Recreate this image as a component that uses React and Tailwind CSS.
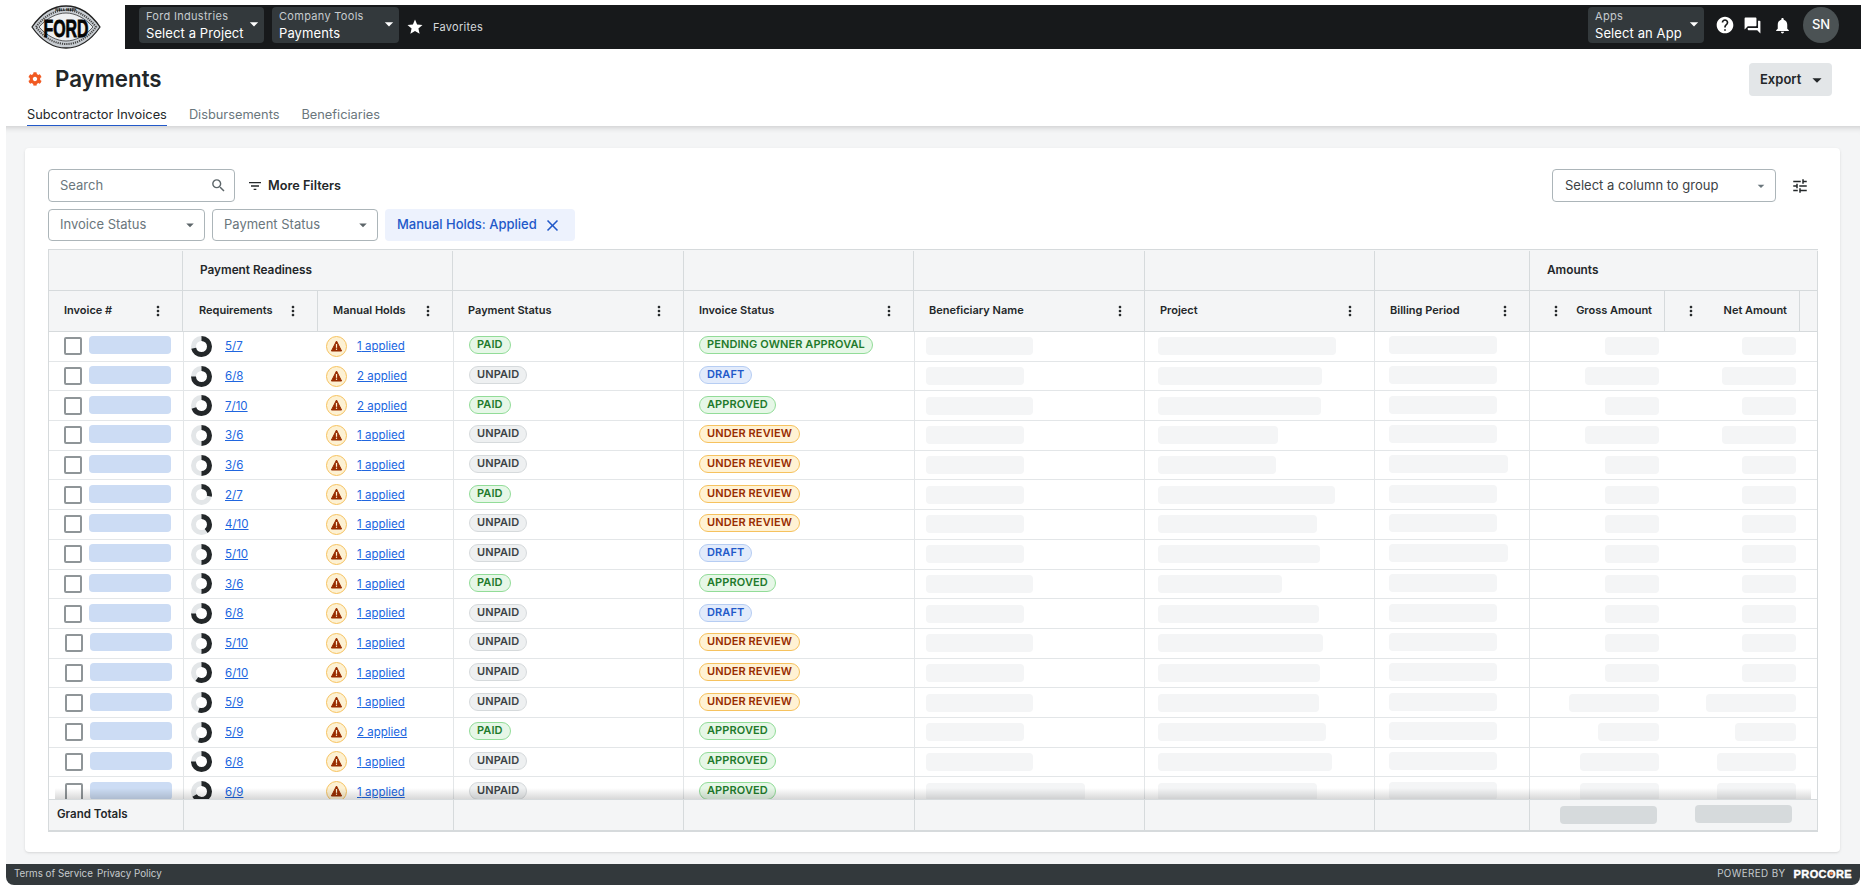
import { MdStar, MdHelp, MdForum, MdNotifications, MdSearch, MdFilterList, MdTune, MdClose, MdMoreVert, MdArrowDropDown } from 'react-icons/md'
import { FaCog } from 'react-icons/fa'

const HEAD_COLS = 'grid-cols-[134px_135px_135px_231px_230px_231px_230px_155px_135px_135px_18px]'
const BODY_COLS = 'grid-cols-[135px_135px_135px_230px_231px_230px_230px_155px_135px_153px]'
const TOTAL_COLS = 'grid-cols-[135px_270px_230px_231px_230px_230px_155px_135px_153px]'

const rows = [
  { req: '5/7', holds: 1, pay: 'PAID', inv: 'PENDING OWNER APPROVAL', ben: 107, proj: 178, bill: 108, amt: 54 },
  { req: '6/8', holds: 2, pay: 'UNPAID', inv: 'DRAFT', ben: 98, proj: 164, bill: 108, amt: 74 },
  { req: '7/10', holds: 2, pay: 'PAID', inv: 'APPROVED', ben: 107, proj: 163, bill: 108, amt: 54 },
  { req: '3/6', holds: 1, pay: 'UNPAID', inv: 'UNDER REVIEW', ben: 98, proj: 120, bill: 108, amt: 74 },
  { req: '3/6', holds: 1, pay: 'UNPAID', inv: 'UNDER REVIEW', ben: 98, proj: 118, bill: 119, amt: 54 },
  { req: '2/7', holds: 1, pay: 'PAID', inv: 'UNDER REVIEW', ben: 98, proj: 177, bill: 108, amt: 54 },
  { req: '4/10', holds: 1, pay: 'UNPAID', inv: 'UNDER REVIEW', ben: 98, proj: 159, bill: 108, amt: 54 },
  { req: '5/10', holds: 1, pay: 'UNPAID', inv: 'DRAFT', ben: 98, proj: 162, bill: 119, amt: 54 },
  { req: '3/6', holds: 1, pay: 'PAID', inv: 'APPROVED', ben: 107, proj: 124, bill: 108, amt: 54 },
  { req: '6/8', holds: 1, pay: 'UNPAID', inv: 'DRAFT', ben: 98, proj: 161, bill: 108, amt: 54 },
  { req: '5/10', holds: 1, pay: 'UNPAID', inv: 'UNDER REVIEW', ben: 107, proj: 165, bill: 108, amt: 54 },
  { req: '6/10', holds: 1, pay: 'UNPAID', inv: 'UNDER REVIEW', ben: 98, proj: 162, bill: 108, amt: 54 },
  { req: '5/9', holds: 1, pay: 'UNPAID', inv: 'UNDER REVIEW', ben: 107, proj: 161, bill: 108, amt: 90 },
  { req: '5/9', holds: 2, pay: 'PAID', inv: 'APPROVED', ben: 98, proj: 168, bill: 108, amt: 61 },
  { req: '6/8', holds: 1, pay: 'UNPAID', inv: 'APPROVED', ben: 107, proj: 174, bill: 108, amt: 79 },
  { req: '6/9', holds: 1, pay: 'UNPAID', inv: 'APPROVED', ben: 159, proj: 159, bill: 108, amt: 79 },
]

const badgeTone = {
  PAID: 'bg-[#e6f7e7] border-[#92dc98] text-[#1f7a2c]',
  APPROVED: 'bg-[#e6f7e7] border-[#92dc98] text-[#1f7a2c]',
  'PENDING OWNER APPROVAL': 'bg-[#e6f7e7] border-[#92dc98] text-[#1f7a2c]',
  UNPAID: 'bg-[#eef0f1] border-[#d6dadc] text-[#3c4245]',
  DRAFT: 'bg-[#e2ebfb] border-[#b6cdf3] text-[#2259c9]',
  'UNDER REVIEW': 'bg-[#fff2d4] border-[#f6c25e] text-[#982c00]',
}

function Logo() {
  return (
    <svg width="70" height="44" viewBox="0 0 70 44" className="ml-[31px] shrink-0 overflow-visible">
      <path d="M1 22 C12 6 24 1 35 1 C46 1 58 6 69 22 C58 38 46 43 35 43 C24 43 12 38 1 22Z" fill="#c9ced3" stroke="#222" strokeWidth="1.3" />
      <path d="M5 22 C14 10 25 5 35 5 C45 5 56 10 65 22 C56 34 45 39 35 39 C25 39 14 34 5 22Z" fill="none" stroke="#444" strokeWidth="2" strokeDasharray="1.2 1" />
      <path d="M8 22 C16 13 26 8 35 8 C44 8 54 13 62 22 C54 31 44 36 35 36 C26 36 16 31 8 22Z" fill="#eef0f2" stroke="#333" strokeWidth="0.8" />
      <text x="35" y="5.5" textAnchor="middle" fontSize="3.6" fontWeight="700" fontFamily="Liberation Sans, sans-serif" fill="#111">WALL MARK</text>
      <text x="35" y="32" textAnchor="middle" fontSize="24" fontWeight="700" textLength="45" lengthAdjust="spacingAndGlyphs" fontFamily="Liberation Sans, sans-serif" fill="#050505" stroke="#050505" strokeWidth="0.8">FORD</text>
    </svg>
  )
}

function NavSelect({ label, value, width }) {
  return (
    <div className={`relative h-9 rounded bg-[#33393c] pl-[7px] pt-[3px] ${width}`}>
      <div className="text-[11px] leading-[13px] tracking-[0.3px] text-[#c6cbce]">{label}</div>
      <div className="mt-[2px] text-[13px] leading-[16px] tracking-[0.1px] text-white">{value}</div>
      <MdArrowDropDown size={20} className="absolute right-0 top-[7px] text-white" />
    </div>
  )
}

function Donut({ value }) {
  const [a, b] = value.split('/').map(Number)
  return (
    <svg width="21" height="21" viewBox="0 0 21 21" className="shrink-0 -rotate-90">
      <circle cx="10.5" cy="10.5" r="8" fill="none" stroke="#e3e6e8" strokeWidth="5" />
      <circle cx="10.5" cy="10.5" r="8" fill="none" stroke="#232729" strokeWidth="5" pathLength={100} strokeDasharray={`${(a / b) * 100} 100`} />
    </svg>
  )
}

function Warn() {
  return (
    <svg width="21" height="21" viewBox="0 0 21 21" className="shrink-0">
      <circle cx="10.5" cy="10.5" r="10" fill="#fdf1d3" stroke="#f6c25e" />
      <path d="M10.5 5 L15.6 15 H5.4 Z" fill="#982c00" stroke="#982c00" strokeLinejoin="round" />
      <rect x="9.9" y="8" width="1.2" height="3.8" fill="#fdf1d3" />
      <rect x="9.9" y="12.6" width="1.2" height="1.3" fill="#fdf1d3" />
    </svg>
  )
}

function Badge({ text }) {
  return (
    <span className={`inline-block h-[18px] rounded-full border px-[7px] text-[11px] font-semibold leading-[14px] tracking-[0.1px] ${badgeTone[text]}`}>
      {text}
    </span>
  )
}

function Skel({ w, className = '' }) {
  return <div className={`h-[18px] rounded bg-[#f4f5f6] ${className}`} style={{ width: w }} />
}

function HeadCell({ label, pad = 'pl-[15px] pr-[16px]', right }) {
  return (
    <div className={`flex h-10 items-center justify-between border-r border-[#d6dadc] pb-[1px] ${pad}`}>
      {right && <MdMoreVert size={16} className="shrink-0 text-[#232729]" />}
      <span className="text-[11px] font-semibold text-[#232729]">{label}</span>
      {!right && <MdMoreVert size={16} className="shrink-0 text-[#232729]" />}
    </div>
  )
}

function Row({ r, i }) {
  return (
    <div className={`grid h-[29.7px] border-b border-[#e3e6e8] ${BODY_COLS}`}>
      <div className={`flex items-center border-r border-[#e3e6e8] ${i > 9 ? 'pl-[16px]' : 'pl-[15px]'}`}>
        <span className="h-[18px] w-[18px] shrink-0 rounded-[2px] border-2 border-[#8f9598] bg-white" />
        <div className="mb-[2px] ml-[7px] h-[18px] w-[82px] rounded bg-[#ccdcf4]" />
      </div>
      <div className="flex items-center pl-[7px]">
        <Donut value={r.req} />
        <a className="ml-[13px] mt-[1px] text-[11.5px] text-[#2066df] underline">{r.req}</a>
      </div>
      <div className="flex items-center border-r border-[#e3e6e8] pl-[7px]">
        <Warn />
        <a className="ml-[10px] mt-[1px] text-[11.5px] text-[#2066df] underline">{r.holds} applied</a>
      </div>
      <div className="flex items-center border-r border-[#e3e6e8] pb-[2px] pl-[15px]">
        <Badge text={r.pay} />
      </div>
      <div className="flex items-center border-r border-[#e3e6e8] pb-[2px] pl-[15px]">
        <Badge text={r.inv} />
      </div>
      <div className="flex items-center border-r border-[#e3e6e8] pl-[11px]">
        <Skel w={r.ben} />
      </div>
      <div className="flex items-center border-r border-[#e3e6e8] pl-[13px]">
        <Skel w={r.proj} />
      </div>
      <div className="flex items-center border-r border-[#e3e6e8] pb-[2px] pl-[14px]">
        <Skel w={r.bill} />
      </div>
      <div className="flex items-center justify-end pr-[6px]">
        <Skel w={r.amt} />
      </div>
      <div className="flex items-center justify-end pr-[22px]">
        <Skel w={r.amt} />
      </div>
    </div>
  )
}

function Table() {
  return (
    <div className="w-[1770px] border-l border-t border-[#d6dadc]">
      {/* group header */}
      <div className={`grid h-[41px] border-b border-[#d6dadc] bg-[#f4f5f6] pt-[1px] text-[11.8px] font-semibold text-[#232729] ${HEAD_COLS}`}>
        <div className="border-r border-[#d6dadc]" />
        <div className="col-span-2 flex items-center border-r border-[#d6dadc] pl-[17px]">Payment Readiness</div>
        <div className="border-r border-[#d6dadc]" />
        <div className="border-r border-[#d6dadc]" />
        <div className="border-r border-[#d6dadc]" />
        <div className="border-r border-[#d6dadc]" />
        <div className="border-r border-[#d6dadc]" />
        <div className="col-span-3 flex items-center border-r border-[#d6dadc] pl-[17px]">Amounts</div>
      </div>
      {/* column header */}
      <div className={`grid border-b border-[#d6dadc] bg-[#f4f5f6] ${HEAD_COLS}`}>
        <HeadCell label="Invoice #" />
        <HeadCell label="Requirements" pad="pl-[16px] pr-[16px]" />
        <HeadCell label="Manual Holds" />
        <HeadCell label="Payment Status" />
        <HeadCell label="Invoice Status" />
        <HeadCell label="Beneficiary Name" />
        <HeadCell label="Project" />
        <HeadCell label="Billing Period" />
        <HeadCell label="Gross Amount" pad="pl-[18px] pr-[12px]" right />
        <HeadCell label="Net Amount" pad="pl-[18px] pr-[12px]" right />
        <div className="border-r border-[#d6dadc]" />
      </div>
      {/* rows, clipped by the totals bar */}
      <div className="relative h-[467px] overflow-hidden border-r border-[#d6dadc]">
        {rows.map((r, i) => <Row key={i} r={r} i={i} />)}
        <div className="absolute inset-x-[6px] bottom-0 h-[11px] bg-linear-to-t from-black/15 to-transparent" />
      </div>
      {/* grand totals */}
      <div className={`grid h-[33px] border-y border-b-2 border-[#d6dadc] bg-[#f4f5f6] ${TOTAL_COLS}`}>
        <div className="flex items-center border-r border-[#d6dadc] pl-[8px] text-[11.5px] font-semibold text-[#232729]">Grand Totals</div>
        <div className="border-r border-[#d6dadc]" />
        <div className="border-r border-[#d6dadc]" />
        <div className="border-r border-[#d6dadc]" />
        <div className="border-r border-[#d6dadc]" />
        <div className="border-r border-[#d6dadc]" />
        <div className="border-r border-[#d6dadc]" />
        <div className="flex items-center justify-end pr-[8px]">
          <div className="h-[18px] w-[97px] rounded bg-[#d6dadc]" />
        </div>
        <div className="flex items-center justify-end border-r border-[#d6dadc] pr-[25px]">
          <div className="mb-[2px] h-[18px] w-[97px] rounded bg-[#d6dadc]" />
        </div>
      </div>
    </div>
  )
}

export default function App() {
  return (
    <div className="flex h-[891px] w-[1866px] flex-col overflow-hidden bg-white pt-[5px] font-['Inter',sans-serif] text-[#232729]">
      {/* top nav */}
      <div className="flex h-11 shrink-0 pr-[5px]">
        <div className="w-[125px] shrink-0"><Logo /></div>
        <div className="flex flex-1 items-center bg-[#17191b] pl-[14px] pr-[22px]">
          <div className="mb-[4px] flex gap-2">
            <NavSelect label="Ford Industries" value="Select a Project" width="w-[125px]" />
            <NavSelect label="Company Tools" value="Payments" width="w-[127px]" />
          </div>
          <MdStar size={18} className="ml-[7px] text-white" />
          <span className="ml-[9px] text-[11px] tracking-[0.3px] text-[#d6dadc]">Favorites</span>
          <div className="mb-[4px] ml-auto flex items-center">
            <NavSelect label="Apps" value="Select an App" width="w-[116px]" />
            <MdHelp size={20} className="ml-[11px] text-white" />
            <MdForum size={19} className="ml-[8px] text-white" />
            <MdNotifications size={19} className="ml-[11px] text-white" />
            <div className="ml-[11px] flex h-9 w-9 items-center justify-center rounded-full bg-[#4b5254] text-[13px] font-medium text-white">SN</div>
          </div>
        </div>
      </div>

      {/* page header */}
      <div className="relative flex h-[77px] shrink-0 pl-[27px] pr-[25px]">
        <div className="flex-1">
          <div className="flex h-[50px] items-center pt-[10px]">
            <FaCog size={14} className="ml-[1px] text-[#f15a22]" />
            <h1 className="ml-[13px] text-[22.3px] font-semibold">Payments</h1>
          </div>
          <div className="flex gap-[22px] text-[12.8px] text-[#6a767c]">
            <span className="h-[27px] border-b border-[#2259c9] pt-[6px] text-[#232729]">Subcontractor Invoices</span>
            <span className="pt-[6px]">Disbursements</span>
            <span className="pt-[6px]">Beneficiaries</span>
          </div>
        </div>
        <div className="mr-[9px] mt-[14px] flex h-[33px] w-[83px] items-center justify-between rounded bg-[#e3e6e8] pl-[11px] pr-[4px] text-[13px] font-semibold">
          Export
          <MdArrowDropDown size={22} />
        </div>
      </div>

      {/* content */}
      <div className="mx-[6px] flex h-[739px] shrink-0 flex-col bg-[#f4f5f6] px-[19px] pt-[22px] shadow-[inset_0_7px_6px_-6px_rgba(0,0,0,0.2)]">
        <div className="h-[704px] w-[1815px] rounded bg-white pl-[23px] pt-[21px] shadow-sm">
          <div className="flex h-[33px] items-center pr-[28px]">
            <div className="flex h-[33px] w-[187px] items-center justify-between rounded border border-[#acb5b9] pl-[11px] pr-[7px] text-[13px] text-[#6a767c]">
              Search
              <MdSearch size={17} className="text-[#5c6569]" />
            </div>
            <MdFilterList size={16} className="ml-[12px]" />
            <span className="ml-[5px] text-[12.7px] font-semibold">More Filters</span>
            <div className="ml-auto flex h-[33px] w-[224px] items-center justify-between rounded border border-[#acb5b9] pl-[12px] pr-[6px] text-[13px] text-[#3c4245]">
              Select a column to group
              <MdArrowDropDown size={16} className="text-[#6a767c]" />
            </div>
            <MdTune size={18} className="ml-[15px] mr-[3px]" />
          </div>
          <div className="mt-[7px] flex h-[32px] items-center">
            <div className="flex h-[32px] w-[157px] items-center justify-between rounded border border-[#acb5b9] pl-[11px] pr-[5px] text-[13px] text-[#6a767c]">
              Invoice Status
              <MdArrowDropDown size={18} className="text-[#5c6569]" />
            </div>
            <div className="ml-[7px] flex h-[32px] w-[166px] items-center justify-between rounded border border-[#acb5b9] pl-[11px] pr-[5px] text-[13px] text-[#6a767c]">
              Payment Status
              <MdArrowDropDown size={18} className="text-[#5c6569]" />
            </div>
            <div className="ml-[7px] flex h-[32px] w-[190px] items-center justify-between rounded bg-[#edf2fd] pl-[12px] pr-[13px] text-[13px] font-medium text-[#2259c9]">
              Manual Holds: Applied
              <MdClose size={19} />
            </div>
          </div>
          <div className="mt-[8px]"><Table /></div>
        </div>
      </div>

      {/* footer */}
      <div className="mx-[6px] -mt-[1px] flex h-[21px] shrink-0 items-center justify-between rounded-b-lg bg-[#33393c] pl-[8px] pr-[8px] text-[9.8px] text-[#c6cbce]">
        <div className="flex gap-[4px]">
          <span>Terms of Service</span>
          <span>Privacy Policy</span>
        </div>
        <div className="flex items-center gap-[8px]">
          <span className="tracking-[0.4px]">POWERED BY</span>
          <span className="font-['Liberation_Sans',sans-serif] text-[11px] font-bold tracking-[0.4px] text-white [-webkit-text-stroke:0.4px_white]">
            PROC<span className="relative">O<span className="absolute left-[3px] top-[4px] h-[3px] w-[3px] rounded-full bg-[#f47e42]" /></span>RE
          </span>
        </div>
      </div>
    </div>
  )
}
